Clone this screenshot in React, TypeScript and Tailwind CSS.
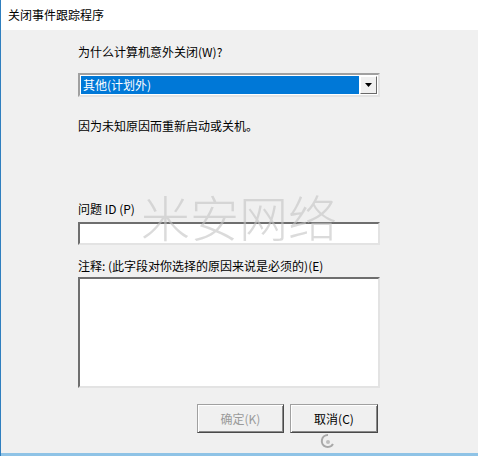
import React from "react";

const font = { fontFamily: '"Noto Sans CJK SC", "Microsoft YaHei", sans-serif' };

function SunkenBox({ className, children }: { className: string; children?: React.ReactNode }) {
  return (
    <div
      className={`border-2 border-t-[#6e6e6e] border-l-[#6e6e6e] border-b-[#e3e3e3] border-r-[#e3e3e3] bg-white ${className}`}
    >
      {children}
    </div>
  );
}

function WinButton({ label, disabled }: { label: string; disabled?: boolean }) {
  return (
    <button
      className={`h-[29px] border border-t-[#a0a0a0] border-l-[#a0a0a0] border-b-[#4a4a4a] border-r-[#4a4a4a] bg-[#f0f0f0] text-[12px] shadow-[inset_1px_1px_0_#ffffff,inset_-1px_-1px_0_#8a8a8a] ${
        disabled ? "w-[87px] text-[#9a9a9a]" : "w-[88px] text-black"
      }`}
      style={font}
    >
      {label}
    </button>
  );
}

export default function App() {
  return (
    <div
      className="relative w-[478px] h-[456px] overflow-hidden bg-[#f0f0f0] border-l border-[#2f7fbf] flex flex-col"
      style={font}
    >
      {/* 标题栏 */}
      <div className="h-[30px] bg-white flex items-center pl-[7px] text-[12px] text-black">关闭事件跟踪程序</div>

      <div className="flex flex-col pl-[77px] w-[380px] text-[12px] leading-[16px] text-black">
        <div className="mt-[14px]">为什么计算机意外关闭(W)?</div>

        <div className="mt-[13px] h-[24px] w-[302px] flex border-2 border-t-[#a0a0a0] border-l-[#a0a0a0] border-b-[#e3e3e3] border-r-[#e3e3e3] bg-white p-px">
          <div className="flex-1 bg-[#0078d7] text-white flex items-center pl-[2px]">其他(计划外)</div>
          <div className="w-[17px] ml-[1px] flex items-center justify-center bg-[#f0f0f0] border border-t-[#ffffff] border-l-[#ffffff] border-b-[#696969] border-r-[#696969]">
            <svg width="7" height="4" viewBox="0 0 7 4">
              <path d="M0 0h7L3.5 4z" fill="#000" />
            </svg>
          </div>
        </div>

        <div className="mt-[21px]">因为未知原因而重新启动或关机。</div>

        <div className="mt-[67px]">问题 ID (P)</div>
        <SunkenBox className="mt-[5px] h-[23px] w-[302px]" />

        <div className="mt-[13px]">注释: (此字段对你选择的原因来说是必须的)(E)</div>
        <SunkenBox className="mt-[3px] h-[111px] w-[302px]" />

        <div className="mt-[16px] w-[302px] flex justify-end gap-[6px] pr-[2px]">
          <WinButton label="确定(K)" disabled />
          <WinButton label="取消(C)" />
        </div>
      </div>

      {/* 水印 */}
      <div
        className="absolute left-[140px] top-[186px] text-[49px] leading-[60px] text-[#c4c4c4] opacity-60 font-extralight pointer-events-none"
        style={{ fontFamily: '"Noto Sans CJK SC", serif' }}
      >
        米安网络
      </div>

      {/* 小图标 */}
      <svg className="absolute left-[318px] top-[433px]" width="18" height="18" viewBox="0 0 18 18">
        <path d="M9 2a6 6 0 1 0 5 9" stroke="#a8a8a8" strokeWidth="2" fill="none" />
        <circle cx="9" cy="9" r="2" fill="#bdbdbd" />
      </svg>

      <div className="absolute left-0 right-0 bottom-0 h-[3px] bg-[#8fc3e6]" />
    </div>
  );
}
